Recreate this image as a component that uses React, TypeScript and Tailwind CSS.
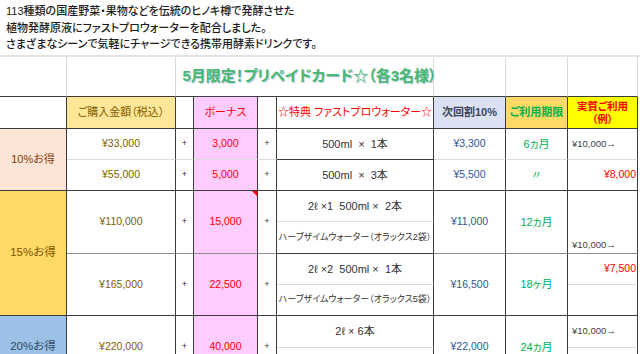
import type { ReactNode } from "react"

const rc = {
  d: "border-r border-r-[#3c3c3c]",
  l: "border-r border-r-[#dadada]",
  n: "",
}
const bc = {
  d: "border-b border-b-[#3c3c3c]",
  m: "border-b border-b-[#8e8e8e]",
  l: "border-b border-b-[#dcdcdc]",
  n: "",
}

type Side = "d" | "l" | "m" | "n"

function Cell({
  r = "d",
  b = "d",
  className = "",
  children,
}: {
  r?: Side
  b?: Side
  className?: string
  children?: ReactNode
}) {
  return (
    <div className={`flex items-center justify-center ${rc[r as "d" | "l" | "n"] ?? ""} ${bc[b]} ${className}`}>
      {children}
    </div>
  )
}

const Plus = () => <span className="text-[9px] text-[#333]">+</span>

export default function App() {
  return (
    <div className="w-[640px] bg-white font-['Liberation_Sans','Noto_Sans_CJK_JP',sans-serif] [font-feature-settings:'palt'] text-[#222]">
      {/* intro */}
      <div className="h-[55px] pt-[3px] pl-[6px] text-[11px] font-medium leading-[16.5px] text-[#1c1c1c]">
        <p>113種類の国産野菜・果物などを伝統のヒノキ樽で発酵させた</p>
        <p>植物発酵原液にファストプロウォーターを配合しました。</p>
        <p>さまざまなシーンで気軽にチャージできる携帯用酵素ドリンクです。</p>
      </div>

      <div className="border-t-2 border-t-[#e2e2e2]">
        <div className="grid w-[638px] grid-cols-[67px_109px_18px_64px_19px_157px_72px_62px_70px] grid-rows-[40px_32px_31px_31px_31px_32px_31px_31px_32px_31px]">
          {/* title row */}
          <Cell r="l" />
          <Cell r="l" />
          <Cell r="l" className="col-span-4 pl-[10px]">
            <span className="text-[15px] font-bold text-[#46b872] [text-shadow:1px_1px_1px_#b5c6dc] whitespace-nowrap">
              5月限定！プリペイドカード☆（各3名様）
            </span>
          </Cell>
          <Cell r="l" />
          <Cell r="l" />
          <Cell r="l" />

          {/* header row */}
          <Cell />
          <Cell className="bg-[#ffe699] text-[11px] text-[#7f6000]">ご購入金額（税込）</Cell>
          <Cell />
          <Cell className="bg-[#ffccff] text-[11px] text-[#ff0000]">ボーナス</Cell>
          <Cell />
          <Cell className="text-[11px] text-[#ff0000] whitespace-nowrap">☆特典 ファストプロウォーター☆</Cell>
          <Cell className="bg-[#d9e1f2] text-[11px] font-bold text-[#3a4660]">次回割10%</Cell>
          <Cell className="bg-[#ffd966] text-[11px] font-bold text-[#00b050]">ご利用期限</Cell>
          <Cell className="flex-col bg-[#ffff00] text-[10.5px] font-bold leading-[13px] text-[#ff0000]">
            <span>実質ご利用</span>
            <span>（例）</span>
          </Cell>

          {/* 10% */}
          <Cell className="row-span-2 bg-[#fce4d6] text-[11px] text-[#843c0c]">10%お得</Cell>
          <Cell b="l" className="text-[10.5px] text-[#7f6000]">¥33,000</Cell>
          <Cell b="l"><Plus /></Cell>
          <Cell b="l" className="bg-[#ffccff] text-[10.5px] text-[#ff0000]">3,000</Cell>
          <Cell b="l"><Plus /></Cell>
          <Cell className="text-[11px] text-[#333] whitespace-pre">500ml  ×  1本</Cell>
          <Cell b="l" className="text-[10.5px] text-[#2f5597]">¥3,300</Cell>
          <Cell b="l" className="text-[11px] text-[#00b050]">6ヵ月</Cell>
          <Cell b="l" className="justify-start pl-[4px] text-[9.5px] text-[#404040]">¥10,000→</Cell>

          <Cell className="text-[10.5px] text-[#7f6000]">¥55,000</Cell>
          <Cell><Plus /></Cell>
          <Cell className="bg-[#ffccff] text-[10.5px] text-[#ff0000]">5,000</Cell>
          <Cell><Plus /></Cell>
          <Cell className="text-[11px] text-[#333] whitespace-pre">500ml  ×  3本</Cell>
          <Cell className="text-[10.5px] text-[#2f5597]">¥5,500</Cell>
          <Cell className="text-[11px] text-[#00b050]">〃</Cell>
          <Cell className="justify-end pr-[1px] text-[10.5px] text-[#ff0000]">¥8,000</Cell>

          {/* 15% */}
          <Cell className="row-span-4 bg-[#ffd966] text-[11.5px] text-[#7f5200]">15%お得</Cell>
          <Cell b="m" className="row-span-2 text-[10.5px] text-[#7f6000]">¥110,000</Cell>
          <Cell b="m" className="row-span-2"><Plus /></Cell>
          <Cell b="m" className="relative row-span-2 bg-[#ffccff] text-[10.5px] text-[#ff0000]">
            15,000
            <span className="absolute right-0 top-0 h-0 w-0 border-l-[5px] border-t-[5px] border-l-transparent border-t-[#ff0000]" />
          </Cell>
          <Cell b="m" className="row-span-2"><Plus /></Cell>
          <Cell b="l" className="text-[11px] text-[#333] whitespace-pre">2ℓ ×1  500ml ×  2本</Cell>
          <Cell b="m" className="row-span-2 text-[10.5px] text-[#2f5597]">¥11,000</Cell>
          <Cell b="m" className="row-span-2 text-[11px] text-[#00b050]">12ヵ月</Cell>
          <Cell b="m" className="row-span-2 items-end justify-start pb-[1px] pl-[4px] text-[9.5px] text-[#404040]">¥10,000→</Cell>

          <Cell className="text-[9px] text-[#333] whitespace-nowrap">ハーブザイムウォーター（オラックス2袋）</Cell>

          <Cell className="row-span-2 text-[10.5px] text-[#7f6000]">¥165,000</Cell>
          <Cell className="row-span-2"><Plus /></Cell>
          <Cell className="row-span-2 bg-[#ffccff] text-[10.5px] text-[#ff0000]">22,500</Cell>
          <Cell className="row-span-2"><Plus /></Cell>
          <Cell b="l" className="text-[11px] text-[#333] whitespace-pre">2ℓ ×2  500ml ×  1本</Cell>
          <Cell className="row-span-2 text-[10.5px] text-[#2f5597]">¥16,500</Cell>
          <Cell className="row-span-2 text-[11px] text-[#00b050]">18ヶ月</Cell>
          <Cell b="l" className="justify-end pr-[1px] text-[10.5px] text-[#ff0000]">¥7,500</Cell>

          <Cell className="text-[9px] text-[#333] whitespace-nowrap">ハーブザイムウォーター（オラックス5袋）</Cell>
          <Cell />

          {/* 20% */}
          <Cell className="row-span-2 bg-[#9bc2e6] text-[11.5px] text-[#2f4a6a]">20%お得</Cell>
          <Cell className="row-span-2 text-[10.5px] text-[#7f6000]">¥220,000</Cell>
          <Cell className="row-span-2"><Plus /></Cell>
          <Cell className="row-span-2 bg-[#ffccff] text-[10.5px] text-[#ff0000]">40,000</Cell>
          <Cell className="row-span-2"><Plus /></Cell>
          <Cell b="l" className="text-[11px] text-[#333] whitespace-pre">2ℓ × 6本</Cell>
          <Cell className="row-span-2 text-[10.5px] text-[#2f5597]">¥22,000</Cell>
          <Cell className="row-span-2 text-[11px] text-[#00b050]">24ヵ月</Cell>
          <Cell b="l" className="justify-start pl-[4px] text-[9.5px] text-[#404040]">¥10,000→</Cell>

          <Cell />
          <Cell />
        </div>
      </div>
    </div>
  )
}
